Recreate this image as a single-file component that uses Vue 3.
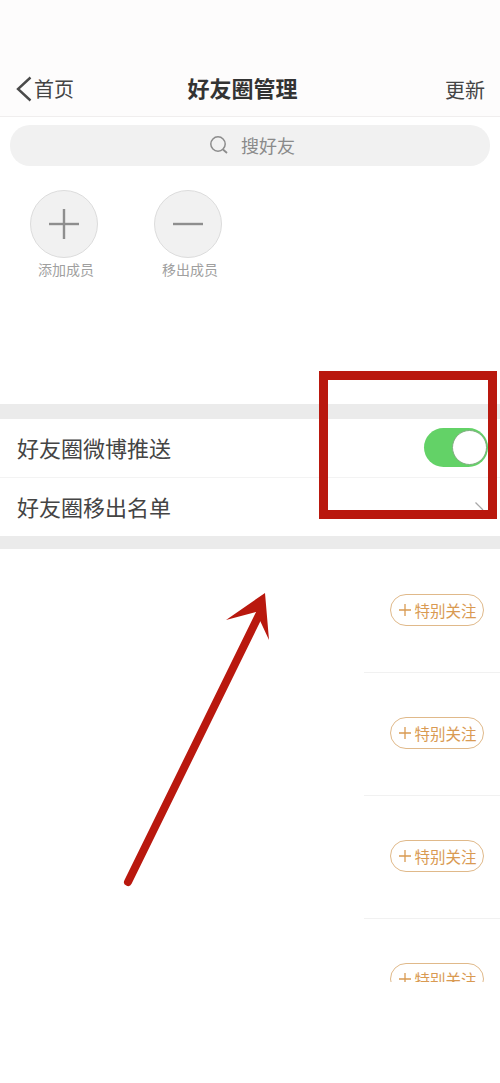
<script setup>
const followRows = [1, 2, 3, 4]
const members = [
  { label: '添加成员', plus: true },
  { label: '移出成员', plus: false },
]
</script>

<template>
  <div class="page">
    <header class="nav">
      <div class="nav-side">
        <svg class="back" width="18" height="26" viewBox="0 0 18 26">
          <path d="M15.5 1.5 3 13l12.5 11.5" fill="none" stroke="#4a4a4a" stroke-width="2.4" />
        </svg>
        <span>首页</span>
      </div>
      <h1 class="title">好友圈管理</h1>
      <div class="nav-right">更新</div>
    </header>

    <div class="search">
      <svg width="20" height="20" viewBox="0 0 20 20">
        <circle cx="9" cy="9" r="7.2" fill="none" stroke="#8c8c8c" stroke-width="1.5" />
        <path d="M14 14.5 18 18" stroke="#8c8c8c" stroke-width="1.8" />
      </svg>
      <span>搜好友</span>
    </div>

    <div class="members">
      <div v-for="m in members" :key="m.label" class="member">
        <div class="circle">
          <svg width="32" height="32" viewBox="0 0 32 32">
            <path d="M1 16h30" stroke="#8e8e8e" stroke-width="2.4" />
            <path v-if="m.plus" d="M16 1v30" stroke="#8e8e8e" stroke-width="2.4" />
          </svg>
        </div>
        <span class="member-label">{{ m.label }}</span>
      </div>
    </div>

    <div class="band band-top"></div>
    <div class="row row-line">
      <span>好友圈微博推送</span>
      <div class="toggle"><div class="knob"></div></div>
    </div>
    <div class="row">
      <span>好友圈移出名单</span>
      <svg class="chev" width="9" height="10" viewBox="0 0 9 10">
        <path d="M0.5 0.5 8 8" fill="none" stroke="#a8a8a8" stroke-width="1.2" />
      </svg>
    </div>
    <div class="band band-bottom"></div>

    <div class="follow-list">
      <div v-for="r in followRows" :key="r" class="follow-row">
        <div class="follow-btn">
          <svg width="12" height="12" viewBox="0 0 12 12">
            <path d="M0 6h12M6 0v12" stroke="#d99a52" stroke-width="1.3" />
          </svg>
          <span>特别关注</span>
        </div>
      </div>
    </div>

    <div class="red-box"></div>
    <svg class="arrow" width="500" height="1083" viewBox="0 0 500 1083">
      <path d="M128 882 259 615" fill="none" stroke="#b9180e" stroke-width="8" stroke-linecap="round" />
      <path d="M265 593 226 620 256 612 269 640Z" fill="#b9180e" />
    </svg>
  </div>
</template>

<style scoped>
.page {
  position: relative;
  width: 500px;
  height: 1083px;
  overflow: hidden;
  background: #fff;
  font-family: "Noto Sans CJK SC", "Noto Sans", sans-serif;
  color: #3a3a3a;
}
.nav {
  height: 117px;
  box-sizing: border-box;
  padding: 0 15px 12px;
  background: #fdfcfc;
  border-bottom: 1px solid #f0eeee;
  display: flex;
  align-items: flex-end;
  justify-content: space-between;
}
.nav-side {
  display: flex;
  align-items: center;
  gap: 1px;
  font-size: 20px;
  line-height: 30px;
  color: #444;
}
.back {
  flex: none;
}
.title {
  margin: 0 32px 1px -2px;
  font-size: 22px;
  line-height: 32px;
  font-weight: 700;
  color: #333;
}
.nav-right {
  font-size: 20px;
  line-height: 30px;
  margin-bottom: -1px;
  color: #444;
}
.search {
  margin: 8px 10px 0;
  height: 41px;
  border-radius: 20px;
  background: #f1f1f1;
  display: flex;
  align-items: center;
  justify-content: center;
  gap: 12px;
  padding-left: 4px;
  padding-bottom: 1px;
  box-sizing: border-box;
  font-size: 18px;
  color: #8a8a8a;
}
.members {
  display: flex;
  gap: 56px;
  padding: 24px 0 0 30px;
  height: 238px;
  box-sizing: border-box;
}
.member {
  width: 68px;
  display: flex;
  flex-direction: column;
  align-items: center;
}
.circle {
  width: 68px;
  height: 68px;
  flex: none;
  box-sizing: border-box;
  border: 1px solid #dcdcdc;
  border-radius: 50%;
  background: #f1f1f1;
  display: flex;
  align-items: center;
  justify-content: center;
}
.member-label {
  margin-top: 1px;
  padding-left: 4px;
  font-size: 14px;
  line-height: 20px;
  white-space: nowrap;
  color: #a0a0a0;
}
.band {
  background: #ebebeb;
}
.band-top {
  height: 15px;
}
.band-bottom {
  height: 13px;
}
.row {
  height: 58px;
  box-sizing: border-box;
  padding: 0 17px 3px;
  display: flex;
  align-items: center;
  justify-content: space-between;
  font-size: 22px;
  color: #444;
  position: relative;
}
.row-line {
  height: 59px;
  border-bottom: 1px solid #f3f3f3;
}
.toggle {
  position: absolute;
  left: 424px;
  top: 9px;
  width: 64px;
  height: 39px;
  border-radius: 20px;
  background: #63d267;
}
.knob {
  position: absolute;
  right: 1px;
  top: 2px;
  width: 35px;
  height: 35px;
  box-sizing: border-box;
  border: 1px solid #7fae7f;
  border-radius: 50%;
  background: #fff;
}
.chev {
  position: absolute;
  left: 475px;
  top: 24px;
}
.follow-list {
  height: 432px;
  padding-top: 1px;
  overflow: hidden;
}
.follow-row {
  height: 123px;
  box-sizing: border-box;
  margin-left: 364px;
  border-bottom: 1px solid #f1f1f1;
  display: flex;
  align-items: center;
  justify-content: flex-end;
  padding: 0 16px 2px 0;
}
.follow-btn {
  width: 94px;
  height: 32px;
  box-sizing: border-box;
  border: 1px solid #e0b98a;
  border-radius: 16px;
  display: flex;
  align-items: center;
  justify-content: center;
  gap: 3px;
  padding-left: 2px;
  font-size: 15.5px;
  line-height: 20px;
  color: #d99a52;
  white-space: nowrap;
}
.red-box {
  position: absolute;
  left: 319px;
  top: 371px;
  width: 178px;
  height: 148px;
  box-sizing: border-box;
  border: 9px solid #b9180e;
}
.arrow {
  position: absolute;
  left: 0;
  top: 0;
  pointer-events: none;
}
</style>
